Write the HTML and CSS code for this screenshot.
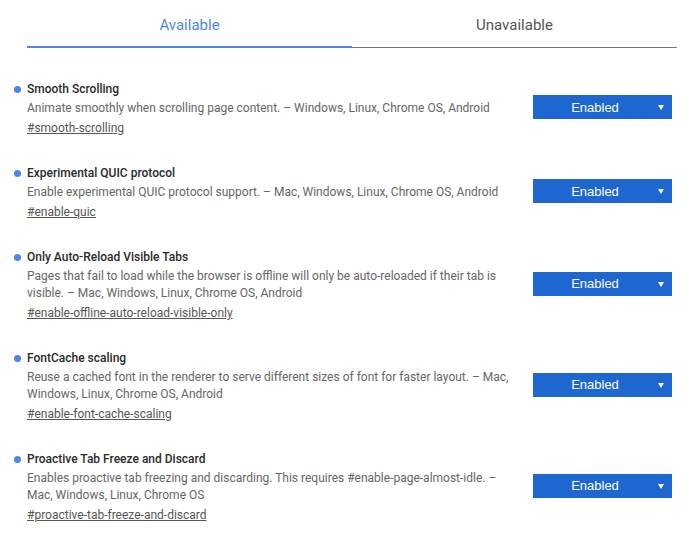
FILE: index.html
```html
<!DOCTYPE html>
<html>
<head>
<meta charset="utf-8">
<link rel="stylesheet" href="styles.css">
</head>
<body>
<div class="tabs">
  <div class="tab active">Available</div>
  <div class="tab">Unavailable</div>
</div>
<div class="list">
  <div class="item">
    <div class="info">
      <div class="title">Smooth Scrolling</div>
      <div class="desc">Animate smoothly when scrolling page content. – Windows, Linux, Chrome OS, Android</div>
      <a class="link">#smooth-scrolling</a>
    </div>
    <div class="select"><span>Enabled</span><i class="arrow"></i></div>
  </div>
  <div class="item">
    <div class="info">
      <div class="title">Experimental QUIC protocol</div>
      <div class="desc">Enable experimental QUIC protocol support. – Mac, Windows, Linux, Chrome OS, Android</div>
      <a class="link">#enable-quic</a>
    </div>
    <div class="select"><span>Enabled</span><i class="arrow"></i></div>
  </div>
  <div class="item">
    <div class="info">
      <div class="title">Only Auto-Reload Visible Tabs</div>
      <div class="desc">Pages that fail to load while the browser is offline will only be auto-reloaded if their tab is visible. – Mac, Windows, Linux, Chrome OS, Android</div>
      <a class="link">#enable-offline-auto-reload-visible-only</a>
    </div>
    <div class="select"><span>Enabled</span><i class="arrow"></i></div>
  </div>
  <div class="item">
    <div class="info">
      <div class="title">FontCache scaling</div>
      <div class="desc">Reuse a cached font in the renderer to serve different sizes of font for faster layout. – Mac, Windows, Linux, Chrome OS, Android</div>
      <a class="link">#enable-font-cache-scaling</a>
    </div>
    <div class="select"><span>Enabled</span><i class="arrow"></i></div>
  </div>
  <div class="item">
    <div class="info">
      <div class="title">Proactive Tab Freeze and Discard</div>
      <div class="desc">Enables proactive tab freezing and discarding. This requires #enable-page-almost-idle. – Mac, Windows, Linux, Chrome OS</div>
      <a class="link">#proactive-tab-freeze-and-discard</a>
    </div>
    <div class="select"><span>Enabled</span><i class="arrow"></i></div>
  </div>
</div>
</body>
</html>
```
FILE: styles.css
```css
* { box-sizing: border-box; }
html, body { margin: 0; padding: 0; background: #fff; }
body {
  font-family: Roboto, "Liberation Sans", sans-serif;
  width: 688px;
}
.tabs {
  display: flex;
  margin: 0 11px 0 27px;
}
.tab {
  flex: 1;
  height: 48px;
  padding-top: 15px;
  text-align: center;
  font-size: 15px;
  line-height: 20px;
  color: #555;
  border-bottom: 1px solid #777;
}
.tab.active {
  color: #4d86ee;
  border-bottom: 2px solid #4d86ee;
}
.list {
  padding: 33px 16px 0 27px;
}
.item {
  display: flex;
  align-items: center;
  margin-bottom: 28px;
}
.info {
  flex: 1;
  min-width: 0;
  padding-right: 20px;
}
.title {
  position: relative;
  font-size: 12px;
  font-weight: 500;
  line-height: 17px;
  color: #2a2a2a;
}
.title::before {
  content: "";
  position: absolute;
  left: -13px;
  top: 5px;
  width: 7px;
  height: 7px;
  border-radius: 50%;
  background: #4d86ee;
}
.desc {
  margin-top: 2px;
  font-size: 12px;
  line-height: 17px;
  color: #666;
}
.link {
  display: inline-block;
  margin-top: 3px;
  font-size: 12px;
  line-height: 17px;
  color: #555;
  text-decoration: underline;
}
.select {
  flex: none;
  width: 139px;
  height: 24px;
  margin-bottom: 4px;
  background: #1e66d0;
  color: #fff;
  display: flex;
  align-items: center;
  position: relative;
  font-family: "Liberation Sans", Arial, sans-serif;
  font-size: 13px;
}
.select span {
  flex: 1;
  text-align: center;
  padding-right: 15px;
}
.arrow {
  position: absolute;
  right: 8px;
  top: 10px;
  width: 0;
  height: 0;
  border-left: 3px solid transparent;
  border-right: 3px solid transparent;
  border-top: 5px solid #fff;
}
```
